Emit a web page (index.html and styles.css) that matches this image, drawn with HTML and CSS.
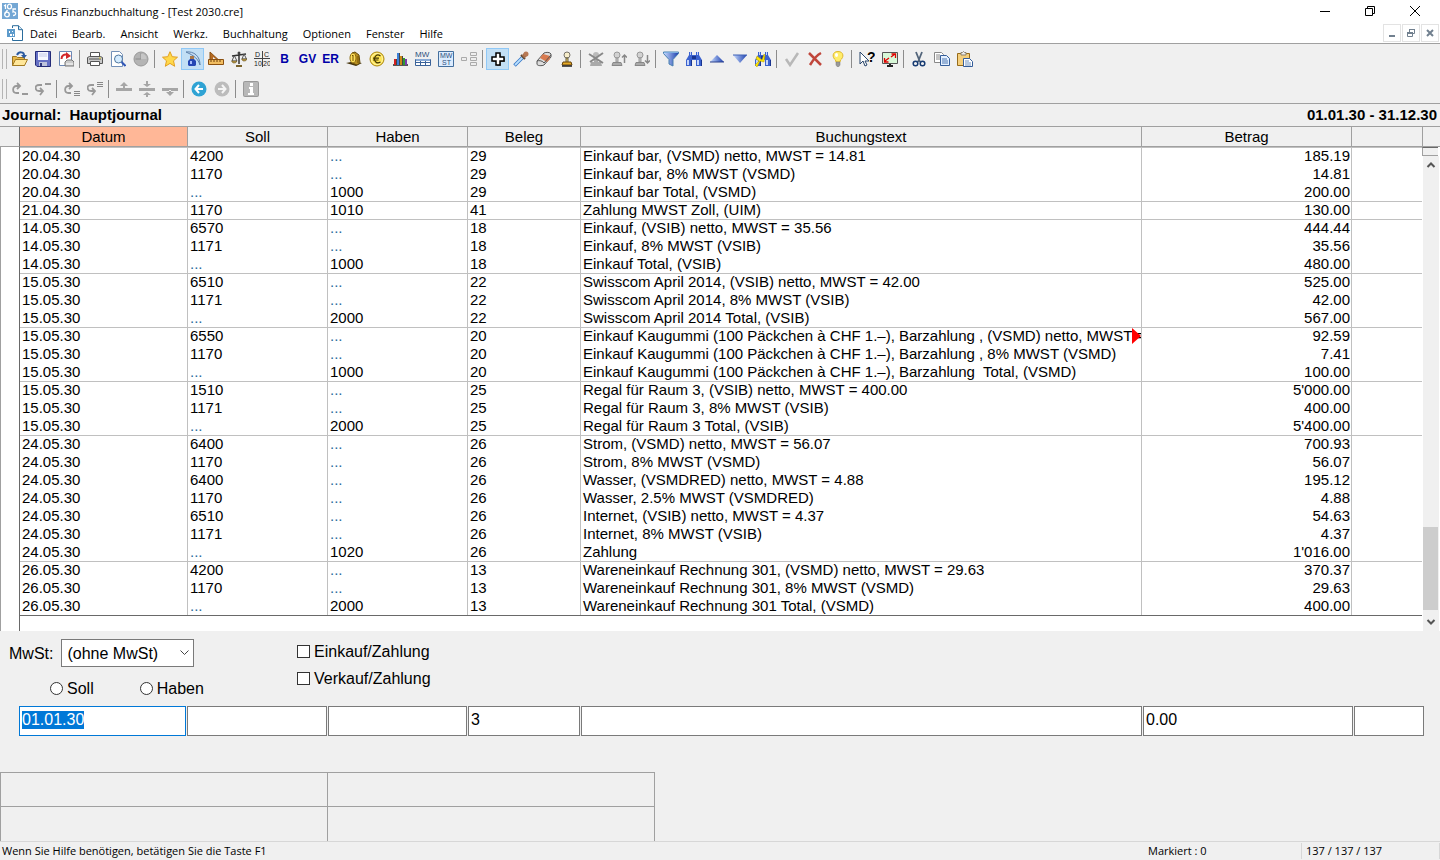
FILE: index.html
```html
<!DOCTYPE html>
<html lang="de">
<head>
  <meta charset="UTF-8"/>
  <title>Crésus Finanzbuchhaltung - [Test 2030.cre]</title>
  <meta name="viewport" content="width=device-width, initial-scale=1.0"/>
  <link rel="stylesheet" href="styles.css">
</head>
<body>

  <!-- shared gradients for the toolbar icons -->
  <svg class="defs" aria-hidden="true">
    <defs>
      <linearGradient id="blue" x1="0" y1="0" x2="1" y2="0"><stop offset="0" stop-color="#c8dcff"/><stop offset="1" stop-color="#1c3fae"/></linearGradient>
    </defs>
    <symbol id="binoculars" viewBox="0 0 16 16">
      <path d="M3 1h3v3h4V1h3v3l3 5v6h-6V9H6v6H0V9l3-5z" fill="#3b62cf"/>
      <path d="M4 1h1v3H4zM11 1h1v3h-1zM1 9h2v5H1zM11 9h2v5h-2z" fill="#c5d5fa"/>
      <path d="M6 5h4v3H6z" fill="#1a3590"/>
      <path d="M5 9h1v6H5zM15 9h1v6h-1z" fill="#1a3590"/>
    </symbol>
    <symbol id="stamp-gray" viewBox="0 0 16 16">
      <circle cx="6" cy="4" r="3" fill="#d2d2d2" stroke="#999"/>
      <path d="M5 7h2v4H5z" fill="#c4c4c4" stroke="#999"/>
      <path d="M2 11.500h8l1 3H1z" fill="#aaa" stroke="#888"/>
    </symbol>
  </svg>

  <header class="titlebar">
    <svg class="logo" viewBox="0 0 16 16" aria-hidden="true"><path fill="#74a7d4" d="M0 0h16v16H0z"/><g fill="none" stroke="#fff" stroke-width="1.300"><ellipse cx="7.500" cy="3.500" rx="2" ry="2.300"/><path d="M2 3l1.500-1v4"/><circle cx="5" cy="11.500" r="2.300"/><path d="M5.500 7L3 10.500M14 6h-3v3c3-1 4 3.500 0 3.500"/></g></svg>
    <h1>Crésus Finanzbuchhaltung - [Test 2030.cre]</h1>
    <div class="window-buttons">
      <button type="button" aria-label="Minimieren"><svg viewBox="0 0 12 12"><path d="M1 6.500h10" stroke="#000"/></svg></button>
      <button type="button" aria-label="Wiederherstellen"><svg viewBox="0 0 12 12"><path d="M1.500 3.500h7v7h-7zM3.500 3.500v-2h7v7h-2" fill="none" stroke="#000"/></svg></button>
      <button type="button" aria-label="Schliessen"><svg viewBox="0 0 12 12"><path d="M1 1l10 10M11 1L1 11" stroke="#000"/></svg></button>
    </div>
  </header>

  <nav class="menubar">
    <svg class="logo" viewBox="0 0 16 16" aria-hidden="true"><path d="M5.500 3V.700h6l4 4v10.800h-10V13" fill="#fff" stroke="#2a6c9c"/><path d="M11.500.700v4h4" fill="#d5e6f3" stroke="#2a6c9c"/><path d="M0 4h8v8H0z" fill="#5e9bcb"/><path d="M2 6h1v2H2zM5 6h1v1H5zM3 9h2v2H3zM6 9h1v2H6z" fill="#fff"/></svg>
    <a href="#">Datei</a>
    <a href="#">Bearb.</a>
    <a href="#">Ansicht</a>
    <a href="#">Werkz.</a>
    <a href="#">Buchhaltung</a>
    <a href="#">Optionen</a>
    <a href="#">Fenster</a>
    <a href="#">Hilfe</a>
    <div class="mdi-buttons">
      <button type="button" aria-label="Fenster minimieren"><svg viewBox="0 0 10 10"><path d="M2 7h6v2H2z" fill="#71808f"/></svg></button>
      <button type="button" aria-label="Fenster wiederherstellen"><svg viewBox="0 0 10 10"><path d="M1.500 4.500h5v4h-5zM3.500 4V1.500h5v4H7" fill="none" stroke="#71808f"/><path d="M1 4h6v2H1zM3 1h6v1H3z" fill="#71808f"/></svg></button>
      <button type="button" aria-label="Fenster schliessen"><svg viewBox="0 0 10 10"><path d="M2 2l6 6M8 2L2 8" stroke="#71808f" stroke-width="2"/></svg></button>
    </div>
  </nav>

  <div class="toolbars">
    <div class="toolbar">
      <span class="grip"></span>
      <button type="button" aria-label="Öffnen"><svg viewBox="0 0 16 16"><path d="M.500 14.500v-9h4l1 1h7v8z" fill="#e8b84a" stroke="#9b7420"/><path d="M.500 14.500l3-6h12l-3 6z" fill="#ffe79a" stroke="#a27a22"/><path d="M5 4c2-4 7-3 7 0" fill="none" stroke="#2b5aa0" stroke-width="2"/><path d="M9 4h6l-3 3.500z" fill="#2b5aa0"/></svg></button>
      <button type="button" aria-label="Speichern"><svg viewBox="0 0 16 16"><path d="M.500 .500h15v15H2l-1.500-1.500z" fill="#6570c4" stroke="#252c78"/><path d="M3 1h10v8H3z" fill="#f7f8ff"/><path d="M4 3h8M4 5h8" stroke="#c5cae9"/><path d="M4 11h8v4H4z" fill="#bfc4dc"/><path d="M5 12h2v3H5z" fill="#30387e"/></svg></button>
      <button type="button" aria-label="PDF"><svg viewBox="0 0 16 16"><path d="M1.500.500h12v14h-12z" fill="#fff" stroke="#6b88b5"/><path d="M3.500 8c0-4 3-5 6-4" fill="none" stroke="#d3272b" stroke-width="2"/><path d="M8 1l5 4-5 3z" fill="#d3272b"/><path d="M7 11l2-2h5l2 2v4H7z" fill="#ccc" stroke="#777"/><path d="M8 13h7" stroke="#fff"/></svg></button>
      <span class="sep"></span>
      <button type="button" aria-label="Drucken"><svg viewBox="0 0 16 16"><path d="M3.500 6V1.500h9V6" fill="#fff" stroke="#555"/><path d="M.500 6.500l2-1h11l2 1v6H.500z" fill="#c9c9c9" stroke="#555"/><path d="M2 8h12" stroke="#555"/><path d="M3.500 10.500h9v4h-9z" fill="#fff" stroke="#555"/><path d="M12 7h2" stroke="#dc3"/></svg></button>
      <button type="button" aria-label="Seitenansicht"><svg viewBox="0 0 16 16"><path d="M1.500.500h8l3 3v12h-11z" fill="#fff" stroke="#7390b8"/><circle cx="8.500" cy="8" r="4" fill="#d5ecff" stroke="#50779f"/><path d="M11.500 11l4 4" stroke="#3157b7" stroke-width="2"/></svg></button>
      <button type="button" aria-label="Verlauf"><svg viewBox="0 0 16 16"><circle cx="8" cy="8" r="7" fill="#b4b4b4" stroke="#999"/><path d="M8 2v6H2.500" fill="none" stroke="#8c8c8c"/><path d="M8 8h5.500A5.500 5.500 0 008 2.500z" fill="#c6c6c6"/></svg></button>
      <span class="sep"></span>
      <button type="button" aria-label="Favoriten"><svg viewBox="0 0 16 16"><path d="M8 .700l2.200 5 5.300.500-4 3.600 1.200 5.500L8 12.400l-4.700 2.900 1.200-5.500-4-3.600 5.300-.500z" fill="#ffd84a" stroke="#e2a020"/></svg></button>
      <button type="button" class="active" aria-label="Journal"><svg viewBox="0 0 16 16"><path d="M1 1c8-1 14 4 14 13-2-6-5-9-14-13z" fill="#c6dcf2" stroke="#5d82ac"/><path d="M5 5h4v3H5z" fill="#a9794a"/><path d="M5 8h4l2 2v4l-1 1H4l-1-1v-4z" fill="#2547b4"/><path d="M5 10h2v3H5z" fill="#a6bdfb"/></svg></button>
      <button type="button" aria-label="Konten"><svg viewBox="0 0 16 16"><path d="M2 1l13 12H2z" fill="#b56a22" stroke="#8b5010"/><path d="M5 6l4 3H5z" fill="#f0f0f0"/><path d="M.500 8.500h15v5H.500z" fill="#f1bd61" stroke="#8b5010"/><path d="M3 9v2M6 9v2M9 9v2M12 9v2" stroke="#704008"/></svg></button>
      <button type="button" aria-label="Bilanzen"><svg viewBox="0 0 16 16"><path d="M8 2v11M1 5l14-2" stroke="#333" stroke-width="1.500"/><path d="M3 5L1 10h5L3.500 5M13 3l-2 5h4.500L13 3" fill="none" stroke="#555"/><path d="M.500 10H6l-1.500 2H2zM10.500 8H16l-1.500 2H12z" fill="#bb9a48" stroke="#5f4a18" stroke-width=".500"/><path d="M5 14h6v2H5z" fill="#7a632c"/><circle cx="8" cy="2" r="1.500" fill="#444"/></svg></button>
      <button type="button" aria-label="Soll und Haben"><svg viewBox="0 0 16 16"><path d="M0 7.500h16M8.500 0v16" stroke="#444"/><g fill="#222" font-size="7"><text x="1" y="6">D</text><text x="10" y="6">C</text><text x="0" y="15">10</text><text x="9" y="15">20</text></g></svg></button>
      <button type="button" class="letters">B</button>
      <button type="button" class="letters">GV</button>
      <button type="button" class="letters">ER</button>
      <button type="button" aria-label="Budget"><svg viewBox="0 0 16 16"><path d="M0 12l5-1 11 1-6 3z" fill="#45330a"/><path d="M6 2l3-1 4 3 1 8-3 2-5-2z" fill="#b98f20" stroke="#60490c"/><ellipse cx="7" cy="7" rx="3" ry="5" fill="#ffe05a" stroke="#8c6b12"/><path d="M6 5l1-1v6M12 5v7" fill="none" stroke="#704f00"/></svg></button>
      <button type="button" aria-label="Währungen"><svg viewBox="0 0 16 16"><circle cx="8" cy="8" r="7" fill="#ffe550" stroke="#a98512"/><circle cx="8" cy="8" r="5.500" fill="none" stroke="#fff5a8"/><path d="M11.500 5C8 2.500 5.500 5 5.500 8S8 13 11.500 11M4 7.200h6M4 9h5.500" fill="none" stroke="#473800" stroke-width="1.200"/></svg></button>
      <button type="button" aria-label="Grafik"><svg viewBox="0 0 16 16" shape-rendering="crispEdges"><path d="M1 14h15" stroke="#555" stroke-width="2"/><path d="M2 8h2v6H2z" fill="#d32020"/><path d="M5 2h2v12H5z" fill="#3c80d8"/><path d="M8 5h2v9H8z" fill="#c88a18"/><path d="M11 7h2v7h-2z" fill="#2c9934"/><path d="M13 8h2v6h-2z" fill="#793aad"/><path d="M4 8v6M7 2v12M10 5v9" stroke="#444"/></svg></button>
      <button type="button" aria-label="MWST Tabelle"><svg viewBox="0 0 16 16"><text x="0" y="6" font-size="8" class="mw">MW</text><path d="M.500 8.500h15v6H.500zM.500 11.500h15M5.500 8.500v6M10.500 8.500v6" fill="#fff" stroke="#3a6299"/><path d="M1 8h14v2H1z" fill="#88aad6"/></svg></button>
      <button type="button" aria-label="MWST Abrechnung"><svg viewBox="0 0 16 16"><path d="M.500.500h15v15H.500z" fill="#dcecff" stroke="#446f9e"/><g class="mw" font-size="7"><text x="2" y="7">MW</text><text x="4" y="14">ST</text></g></svg></button>
      <button type="button" aria-label="Struktur"><svg viewBox="0 0 16 16"><path d="M.500 6.500h5v3h-5zM9.500 1.500h6v3h-6zM9.500 6.500h6v3h-6zM9.500 11.500h6v3h-6z" fill="#eee" stroke="#aaa"/></svg></button>
      <span class="sep"></span>
      <button type="button" class="active" aria-label="Neu"><svg viewBox="0 0 16 16"><path d="M7 3h4v4h4v4h-4v4H7v-4H3V7h4z" fill="#777"/><path d="M6 2h4v4h4v4h-4v4H6v-4H2V6h4z" fill="#fff" stroke="#000" stroke-width="1.500"/></svg></button>
      <button type="button" aria-label="Pipette"><svg viewBox="0 0 16 16"><path d="M1.500 14.500l8-8" stroke="#3978c7" stroke-width="3.500"/><path d="M2 14l8-8" stroke="#b8e0ff" stroke-width="1.800"/><path d="M8 4l4 4" stroke="#54402f" stroke-width="2"/><path d="M10 6l2.500-2.500" stroke="#a46f4c" stroke-width="4"/><circle cx="13" cy="3" r="2.500" fill="#b87955"/></svg></button>
      <button type="button" aria-label="Löschen"><svg viewBox="0 0 16 16"><path d="M1 10l7-8c2-1 6-1 7 1v3l-7 8c-2 1-7 1-7-1z" fill="#ddd" stroke="#555"/><path d="M4 7l3-4 7 2v3l-3 3z" fill="#d97b50"/><path d="M1 10c2-1 6 0 7 2l7-8" fill="none" stroke="#555"/></svg></button>
      <button type="button" aria-label="Stempel"><svg viewBox="0 0 16 16"><circle cx="8" cy="4" r="3" fill="#f7eecb" stroke="#77726a"/><path d="M7 7h2v5H7z" fill="#e9cf70" stroke="#655d3c"/><path d="M4 11h8l1 3H3z" fill="#e5aa28" stroke="#65420c"/><path d="M3 15h10" stroke="#222" stroke-width="1.500"/></svg></button>
      <span class="sep"></span>
      <button type="button" aria-label="Stempel entfernen"><svg viewBox="0 0 16 16"><circle cx="8" cy="4" r="3" fill="#bbb"/><path d="M6 8h4v3h3l1 4H2l1-4h3z" fill="#aaa"/><path d="M1 3l14 9M15 2L2 11" stroke="#888" stroke-width="2"/></svg></button>
      <button type="button" aria-label="Stempel zurück"><svg viewBox="0 0 16 16"><use href="#stamp-gray"/><path d="M13.500 12V4M11 6.500L13.500 4 16 6.500" fill="none" stroke="#888" stroke-width="1.500"/></svg></button>
      <button type="button" aria-label="Stempel weiter"><svg viewBox="0 0 16 16"><use href="#stamp-gray"/><path d="M13.500 4v8M11 9.500l2.500 2.500L16 9.500" fill="none" stroke="#888" stroke-width="1.500"/></svg></button>
      <span class="sep"></span>
      <button type="button" aria-label="Filter"><svg viewBox="0 0 16 16"><path d="M.500 1h15v1.500L10 8.500V15l-4-2V8.500L.500 2.500z" fill="url(#blue)" stroke="#4a80b0"/><path d="M1 1.500h14" stroke="#7caee0"/></svg></button>
      <button type="button" aria-label="Suchen"><svg><use href="#binoculars"/></svg></button>
      <button type="button" aria-label="Vorheriges"><svg viewBox="0 0 16 16"><path d="M8 4l7 7H1z" fill="url(#blue)"/><path d="M1 11h14" stroke="#283f8c"/></svg></button>
      <button type="button" aria-label="Nächstes"><svg viewBox="0 0 16 16"><path d="M8 12L1 4h14z" fill="url(#blue)"/><path d="M1 4h14" stroke="#3e61b5"/></svg></button>
      <button type="button" aria-label="Ersetzen"><svg viewBox="0 0 16 16"><use href="#binoculars"/><path d="M2 5l5 4 2-6 1 1-1 7-4-1-3 6-2-2 4-4-3-2z" fill="#ffe600" stroke="#b79c00" stroke-width=".500"/></svg></button>
      <span class="sep"></span>
      <button type="button" aria-label="Übernehmen"><svg viewBox="0 0 16 16"><path d="M2 8l4 6 8-12" fill="none" stroke="#b8b8b8" stroke-width="2.500"/></svg></button>
      <button type="button" aria-label="Abbrechen"><svg viewBox="0 0 16 16"><path d="M2 2l12 12M14 2c-4 2-8 7-11 12" fill="none" stroke="#c0463b" stroke-width="2.500"/></svg></button>
      <button type="button" aria-label="Tipp"><svg viewBox="0 0 16 16"><path d="M8 .500c6 0 6 6 2.500 8.500L10 11H6l-.500-2C2 6.500 2 .500 8 .500z" fill="#ffed6a" stroke="#dfb62c"/><path d="M6 11h4v3l-1 1.500H7L6 14z" fill="#999" stroke="#777" stroke-width=".500"/><ellipse cx="6.500" cy="4" rx="1.500" ry="2" fill="#fff"/></svg></button>
      <span class="sep"></span>
      <button type="button" aria-label="Kontexthilfe"><svg viewBox="0 0 16 16"><path d="M1 1v12l3-3 2 5 2-1-2-4h4z" fill="#fff" stroke="#27456b"/><text x="8" y="11" class="question">?</text></svg></button>
      <button type="button" aria-label="Vollbild"><svg viewBox="0 0 16 16"><path d="M.500 1.500h15v11H.500z" fill="#d8f8d8" stroke="#555"/><path d="M5 15h6M8 13v2" stroke="#222" stroke-width="2"/><path d="M3 10l4-3M9 6l4-3M2.500 7v4h4M9.500 3h4v4" fill="none" stroke="#e00000" stroke-width="1.300"/></svg></button>
      <span class="sep"></span>
      <button type="button" aria-label="Ausschneiden"><svg viewBox="0 0 16 16"><path d="M5 1l4 10M11 1L7 11" stroke="#53657b" stroke-width="1.800"/><circle cx="4.500" cy="12.500" r="2.300" fill="none" stroke="#173b72" stroke-width="1.500"/><circle cx="11.500" cy="12.500" r="2.300" fill="none" stroke="#173b72" stroke-width="1.500"/></svg></button>
      <button type="button" aria-label="Kopieren"><svg viewBox="0 0 16 16"><path d="M.500 1.500h7l2 2v8h-9z" fill="#fff" stroke="#888"/><path d="M2 4h4M2 6h5M2 8h4" stroke="#888"/><path d="M6.500 4.500h6l3 3v7h-9z" fill="#e4f0ff" stroke="#345d9a"/><path d="M8 8h5M8 10h6M8 12h6" stroke="#4d77b0"/></svg></button>
      <button type="button" aria-label="Einfügen"><svg viewBox="0 0 16 16"><path d="M.500 2.500h12v12H.500z" fill="#f5cf7c" stroke="#966b1a"/><path d="M4 3V1.500h1.500l1-1 1 1H9V4H4z" fill="#eee" stroke="#8b806c"/><path d="M6.500 7.500h6l3 3v5h-9z" fill="#fff" stroke="#345d9a"/><path d="M8 10h4M8 12h6M8 14h6" stroke="#6c91c0"/></svg></button>
    </div>

    <div class="toolbar">
      <span class="grip"></span>
      <button type="button" aria-label="Zeile unten"><svg viewBox="0 0 16 16"><path d="M8 5H4.500C0 5 0 12 4.500 12H7M5 2l3 3-3 3M10 13h6" fill="none" stroke="#999" stroke-width="1.800"/></svg></button>
      <button type="button" aria-label="Zeile oben"><svg viewBox="0 0 16 16"><path d="M7 4H4C-1 4 0 10 4 10h4M5 7l3 3-3 4M10 3h6" fill="none" stroke="#999" stroke-width="1.800"/></svg></button>
      <span class="sep"></span>
      <button type="button" aria-label="Block unten"><svg viewBox="0 0 16 16"><path d="M8 5H4.500C0 5 0 12 4.500 12H7M5 2l3 3-3 3" fill="none" stroke="#999" stroke-width="1.800"/><path d="M10 10.500h6M10 12.500h6M10 14.500h6" stroke="#888"/></svg></button>
      <button type="button" aria-label="Block oben"><svg viewBox="0 0 16 16"><path d="M7 4H4C-1 4 0 10 4 10h4M5 7l3 3-3 4" fill="none" stroke="#999" stroke-width="1.800"/><path d="M10 1.500h6M10 3.500h6M10 5.500h6" stroke="#888"/></svg></button>
      <span class="sep"></span>
      <button type="button" aria-label="Nach oben"><svg viewBox="0 0 16 16"><path d="M0 7h16v3H0zM8 1l4 4H9v3H7V5H4z" fill="#a6a6a6"/></svg></button>
      <button type="button" aria-label="Zusammen"><svg viewBox="0 0 16 16"><path d="M0 7h16v3H0zM8 6l4-3H9V0H7v3H4zM8 11l4 3H9v2H7v-2H4z" fill="#a6a6a6"/></svg></button>
      <button type="button" aria-label="Nach unten"><svg viewBox="0 0 16 16"><path d="M0 7h16v3H0zM8 15l4-4H9V9H7v2H4z" fill="#a6a6a6"/></svg></button>
      <span class="sep"></span>
      <button type="button" aria-label="Zurück"><svg viewBox="0 0 16 16"><circle cx="8" cy="8" r="7.500" fill="#2fa3d4"/><path d="M12 8H5M8 4L4.500 8 8 12" fill="none" stroke="#fff" stroke-width="2"/></svg></button>
      <button type="button" aria-label="Vorwärts"><svg viewBox="0 0 16 16"><circle cx="8" cy="8" r="7.500" fill="#bcbcbc"/><path d="M4 8h7M8 4l3.500 4L8 12" fill="none" stroke="#f5f5f5" stroke-width="2"/></svg></button>
      <span class="sep"></span>
      <button type="button" aria-label="Info"><svg viewBox="0 0 16 16"><rect width="16" height="16" rx="2" fill="#999"/><rect x="1" y="1" width="14" height="14" rx="1" fill="#b8b8b8"/><path d="M6 6h4v6h1v2H5v-2h2V8H6zM7 2h3v3H7z" fill="#fff"/></svg></button>
    </div>
  </div>

  <div class="journal-head">
    <h2>Journal:&nbsp; Hauptjournal</h2>
    <span>01.01.30 - 31.12.30</span>
  </div>

  <main class="journal">
    <table>
      <colgroup>
        <col class="c-mark"><col class="c-date"><col class="c-account"><col class="c-account"><col class="c-ref"><col><col class="c-amount"><col class="c-rest">
      </colgroup>
      <thead>
        <tr><th class="mark"></th><th class="sorted">Datum</th><th>Soll</th><th>Haben</th><th>Beleg</th><th>Buchungstext</th><th>Betrag</th><th></th></tr>
      </thead>
      <tbody>
        <tr class="first"><td></td><td>20.04.30</td><td>4200</td><td class="dots">...</td><td>29</td><td>Einkauf bar, (VSMD) netto, MWST = 14.81</td><td>185.19</td><td></td></tr>
        <tr><td></td><td>20.04.30</td><td>1170</td><td class="dots">...</td><td>29</td><td>Einkauf bar, 8% MWST (VSMD)</td><td>14.81</td><td></td></tr>
        <tr><td></td><td>20.04.30</td><td class="dots">...</td><td>1000</td><td>29</td><td>Einkauf bar Total, (VSMD)</td><td>200.00</td><td></td></tr>
        <tr class="first"><td></td><td>21.04.30</td><td>1170</td><td>1010</td><td>41</td><td>Zahlung MWST Zoll, (UIM)</td><td>130.00</td><td></td></tr>
        <tr class="first"><td></td><td>14.05.30</td><td>6570</td><td class="dots">...</td><td>18</td><td>Einkauf, (VSIB) netto, MWST = 35.56</td><td>444.44</td><td></td></tr>
        <tr><td></td><td>14.05.30</td><td>1171</td><td class="dots">...</td><td>18</td><td>Einkauf, 8% MWST (VSIB)</td><td>35.56</td><td></td></tr>
        <tr><td></td><td>14.05.30</td><td class="dots">...</td><td>1000</td><td>18</td><td>Einkauf Total, (VSIB)</td><td>480.00</td><td></td></tr>
        <tr class="first"><td></td><td>15.05.30</td><td>6510</td><td class="dots">...</td><td>22</td><td>Swisscom April 2014, (VSIB) netto, MWST = 42.00</td><td>525.00</td><td></td></tr>
        <tr><td></td><td>15.05.30</td><td>1171</td><td class="dots">...</td><td>22</td><td>Swisscom April 2014, 8% MWST (VSIB)</td><td>42.00</td><td></td></tr>
        <tr><td></td><td>15.05.30</td><td class="dots">...</td><td>2000</td><td>22</td><td>Swisscom April 2014 Total, (VSIB)</td><td>567.00</td><td></td></tr>
        <tr class="first"><td></td><td>15.05.30</td><td>6550</td><td class="dots">...</td><td>20</td><td class="overflow">Einkauf Kaugummi (100 Päckchen à CHF 1.–), Barzahlung , (VSMD) netto, MWST = 7.41</td><td>92.59</td><td></td></tr>
        <tr><td></td><td>15.05.30</td><td>1170</td><td class="dots">...</td><td>20</td><td>Einkauf Kaugummi (100 Päckchen à CHF 1.–), Barzahlung , 8% MWST (VSMD)</td><td>7.41</td><td></td></tr>
        <tr><td></td><td>15.05.30</td><td class="dots">...</td><td>1000</td><td>20</td><td>Einkauf Kaugummi (100 Päckchen à CHF 1.–), Barzahlung&nbsp; Total, (VSMD)</td><td>100.00</td><td></td></tr>
        <tr class="first"><td></td><td>15.05.30</td><td>1510</td><td class="dots">...</td><td>25</td><td>Regal für Raum 3, (VSIB) netto, MWST = 400.00</td><td>5'000.00</td><td></td></tr>
        <tr><td></td><td>15.05.30</td><td>1171</td><td class="dots">...</td><td>25</td><td>Regal für Raum 3, 8% MWST (VSIB)</td><td>400.00</td><td></td></tr>
        <tr><td></td><td>15.05.30</td><td class="dots">...</td><td>2000</td><td>25</td><td>Regal für Raum 3 Total, (VSIB)</td><td>5'400.00</td><td></td></tr>
        <tr class="first"><td></td><td>24.05.30</td><td>6400</td><td class="dots">...</td><td>26</td><td>Strom, (VSMD) netto, MWST = 56.07</td><td>700.93</td><td></td></tr>
        <tr><td></td><td>24.05.30</td><td>1170</td><td class="dots">...</td><td>26</td><td>Strom, 8% MWST (VSMD)</td><td>56.07</td><td></td></tr>
        <tr><td></td><td>24.05.30</td><td>6400</td><td class="dots">...</td><td>26</td><td>Wasser, (VSMDRED) netto, MWST = 4.88</td><td>195.12</td><td></td></tr>
        <tr><td></td><td>24.05.30</td><td>1170</td><td class="dots">...</td><td>26</td><td>Wasser, 2.5% MWST (VSMDRED)</td><td>4.88</td><td></td></tr>
        <tr><td></td><td>24.05.30</td><td>6510</td><td class="dots">...</td><td>26</td><td>Internet, (VSIB) netto, MWST = 4.37</td><td>54.63</td><td></td></tr>
        <tr><td></td><td>24.05.30</td><td>1171</td><td class="dots">...</td><td>26</td><td>Internet, 8% MWST (VSIB)</td><td>4.37</td><td></td></tr>
        <tr><td></td><td>24.05.30</td><td class="dots">...</td><td>1020</td><td>26</td><td>Zahlung</td><td>1'016.00</td><td></td></tr>
        <tr class="first"><td></td><td>26.05.30</td><td>4200</td><td class="dots">...</td><td>13</td><td>Wareneinkauf Rechnung 301, (VSMD) netto, MWST = 29.63</td><td>370.37</td><td></td></tr>
        <tr><td></td><td>26.05.30</td><td>1170</td><td class="dots">...</td><td>13</td><td>Wareneinkauf Rechnung 301, 8% MWST (VSMD)</td><td>29.63</td><td></td></tr>
        <tr><td></td><td>26.05.30</td><td class="dots">...</td><td>2000</td><td>13</td><td>Wareneinkauf Rechnung 301 Total, (VSMD)</td><td>400.00</td><td></td></tr>
        <tr class="tail"><td></td><td colspan="7"></td></tr>
      </tbody>
    </table>
    <div class="scroll">
      <span class="scroll-head"></span>
      <span class="splitter"></span>
      <button type="button" aria-label="Nach oben blättern"><svg viewBox="0 0 10 10"><path d="M1.500 7L5 3.500 8.500 7" fill="none" stroke="#555" stroke-width="2"/></svg></button>
      <span class="track"><span class="thumb"></span></span>
      <button type="button" aria-label="Nach unten blättern"><svg viewBox="0 0 10 10"><path d="M1.500 3L5 6.500 8.500 3" fill="none" stroke="#555" stroke-width="2"/></svg></button>
    </div>
  </main>

  <form class="entry">
    <div class="options">
      <div class="vat">
        <div class="vat-code">
          <label for="mwst">MwSt:</label>
          <select id="mwst"><option>(ohne MwSt)</option></select>
        </div>
        <div class="side">
          <label><input type="radio" name="side">Soll</label>
          <label><input type="radio" name="side">Haben</label>
        </div>
      </div>
      <div class="checks">
        <label><input type="checkbox">Einkauf/Zahlung</label>
        <label><input type="checkbox">Verkauf/Zahlung</label>
      </div>
    </div>
    <div class="fields">
      <input type="text" id="date" value="01.01.30" aria-label="Datum" autofocus>
      <input type="text" aria-label="Soll">
      <input type="text" aria-label="Haben">
      <input type="text" value="3" aria-label="Beleg">
      <input type="text" aria-label="Buchungstext">
      <input type="text" value="0.00" aria-label="Betrag">
      <input type="text" aria-label="Zusatz">
    </div>
    <div class="balances">
      <span></span><span></span><span></span><span></span>
    </div>
  </form>

  <footer class="status">
    <span class="hint">Wenn Sie Hilfe benötigen, betätigen Sie die Taste F1</span>
    <span class="marked">Markiert : 0</span>
    <span class="count">137 / 137 / 137</span>
  </footer>

  <script src="script.js"></script>
</body>
</html>
```
FILE: styles.css
```css
* {
  box-sizing: border-box;
}
body {
  margin: 0;
  min-height: 100vh;
  display: flex;
  flex-direction: column;
  background-color: #f0f0f0;
  color: #000;
  font-family: "Open Sans", "Noto Sans", sans-serif;
  font-size: 11px;
}
button {
  margin: 0;
  padding: 0;
  border: 0;
  background: none;
  font: inherit;
  display: flex;
  align-items: center;
  justify-content: center;
}
a {
  color: #000;
  text-decoration: none;
}
.defs {
  position: absolute;
  width: 0;
  height: 0;
}

/* title and menu */
.titlebar, .menubar {
  display: flex;
  align-items: center;
  background-color: #fff;
}
.titlebar {
  height: 24px;
  padding: 0 3px 2px 2px;
}
.titlebar h1 {
  margin: 0 auto 0 5px;
  font-size: 11px;
  font-weight: normal;
}
.logo {
  width: 16px;
  height: 16px;
}
.window-buttons {
  display: flex;
}
.window-buttons button {
  width: 45px;
  height: 20px;
}
.window-buttons svg {
  width: 12px;
  height: 12px;
}
.menubar {
  height: 20px;
  gap: 15px;
  padding: 0 1px 1px 7px;
  border-bottom: 1px solid #a0a0a0;
}
.menubar .logo {
  margin-right: -8px;
}
.mdi-buttons {
  display: flex;
  gap: 1px;
  margin-left: auto;
}
.mdi-buttons button {
  width: 18px;
  height: 18px;
  border: 1px solid #e3e3e3;
}
.mdi-buttons svg {
  width: 10px;
  height: 10px;
}

/* toolbars */
.toolbars {
  height: 60px;
  border-bottom: 1px solid #a0a0a0;
}
.toolbar {
  display: flex;
  align-items: center;
  height: 30px;
  padding-left: 2px;
}
.toolbar button {
  width: 23px;
  height: 22px;
}
.toolbar svg {
  width: 16px;
  height: 16px;
}
.toolbar .active {
  background-color: #c2dff5;
  border: 1px solid #90c8f6;
}
.toolbar .letters {
  color: #0000a8;
  font-family: "Liberation Sans", Arial, sans-serif;
  font-size: 12px;
  font-weight: bold;
}
.toolbar text {
  font-family: "Liberation Sans", Arial, sans-serif;
}
.toolbar .mw {
  fill: #2d4f7c;
}
.toolbar .question {
  font-size: 14px;
  font-weight: bold;
}
.grip {
  width: 5px;
  height: 20px;
  margin-right: 1px;
  border-left: 1px solid #b4b4b4;
  border-right: 1px solid #b4b4b4;
}
.sep {
  width: 6px;
  height: 18px;
  background: linear-gradient(#8c8c8c, #8c8c8c) 2px 0 / 1px 100% no-repeat;
}

/* journal */
.journal-head {
  display: flex;
  justify-content: space-between;
  align-items: center;
  height: 23px;
  padding: 0 3px 2px 2px;
  border-bottom: 1px solid #a0a0a0;
  font-family: "Liberation Sans", Arial, sans-serif;
  font-size: 15px;
  font-weight: bold;
}
.journal-head h2 {
  margin: 0;
  font-size: 15px;
}
.journal {
  display: flex;
  background-color: #fff;
}
table {
  flex: 1;
  width: 0;
  table-layout: fixed;
  border-collapse: separate;
  border-spacing: 0;
  font-family: "Liberation Sans", Arial, sans-serif;
  font-size: 15px;
  line-height: 16px;
}
.c-mark { width: 20px; }
.c-date { width: 168px; }
.c-account { width: 140px; }
.c-ref { width: 113px; }
.c-amount { width: 210px; }
.c-rest { width: 70px; }
th {
  height: 20px;
  padding: 0;
  background-color: #f0f0f0;
  border-right: 1px solid #a0a0a0;
  border-bottom: 1px solid #a0a0a0;
  font-weight: normal;
}
th.mark {
  border-right-color: #696969;
}
th.sorted {
  background-color: #ffb797;
}
th:last-child, td:last-child {
  border-right: 0;
}
td {
  height: 18px;
  padding: 1px 1px 1px 2px;
  border-right: 1px solid #c0c0c0;
  white-space: nowrap;
  overflow: hidden;
}
td:first-child {
  border-left: 1px solid #a0a0a0;
  border-right-color: #696969;
}
td:nth-child(7) {
  text-align: right;
}
.first td + td {
  padding-top: 0;
  border-top: 1px solid #c0c0c0;
}
.dots {
  color: #2a6a9c;
}
.overflow {
  position: relative;
}
.overflow::after {
  content: "";
  position: absolute;
  right: 0;
  top: 0;
  border-left: 9px solid #f00;
  border-top: 8px solid transparent;
  border-bottom: 8px solid transparent;
}
.tail td {
  height: 16px;
  padding: 0;
}
.tail td + td {
  border-top: 1px solid #696969;
}
.scroll {
  display: flex;
  flex-direction: column;
  width: 18px;
}
.scroll-head {
  height: 20px;
  background-color: #f0f0f0;
  border-left: 1px solid #a0a0a0;
  border-bottom: 1px solid #a0a0a0;
}
.splitter {
  width: 16px;
  height: 9px;
  background-color: #f0f0f0;
  border: 1px solid #a0a0a0;
  border-top-color: #696969;
  border-right: 0;
}
.scroll button, .track {
  width: 16px;
  margin-left: 1px;
  background-color: #f0f0f0;
}
.scroll button {
  height: 18px;
}
.scroll svg {
  width: 10px;
  height: 10px;
}
.track {
  flex: 1;
  display: flex;
  flex-direction: column;
  justify-content: flex-end;
  padding-bottom: 3px;
}
.thumb {
  width: 15px;
  height: 83px;
  background-color: #cdcdcd;
}

/* entry form */
.entry {
  flex: 1;
  display: flex;
  flex-direction: column;
  font-family: "Liberation Sans", Arial, sans-serif;
  font-size: 16px;
}
.options {
  display: flex;
  padding: 8px 9px;
}
.vat {
  width: 288px;
}
.vat-code {
  display: flex;
  align-items: center;
  gap: 8px;
}
.vat-code label {
  padding-top: 2px;
}
.vat select {
  appearance: none;
  width: 133px;
  height: 28px;
  padding: 0 5px;
  border: 1px solid #7a7a7a;
  border-radius: 0;
  background: #fff url("data:image/svg+xml,%3Csvg xmlns='http://www.w3.org/2000/svg' width='9' height='6'%3E%3Cpath d='M.5.5l4 4 4-4' fill='none' stroke='%23444'/%3E%3C/svg%3E") right 4px center no-repeat;
  color: #000;
  font: inherit;
}
.side {
  display: flex;
  gap: 46px;
  padding: 12px 0 0 41px;
}
.side label, .checks label {
  display: flex;
  align-items: center;
  gap: 4px;
  line-height: 19px;
}
.entry input {
  appearance: none;
  margin: 0;
  border: 1px solid #333;
  background-color: #fff;
}
.side input, .checks input {
  width: 13px;
  height: 13px;
}
.side input {
  border-radius: 50%;
}
.checks {
  display: flex;
  flex-direction: column;
  gap: 8px;
  padding-top: 3px;
}
.fields {
  display: grid;
  grid-template-columns: 167px 140px 139px 112px 1fr 210px 70px;
  gap: 1px;
  padding: 0 16px 0 19px;
}
.fields input {
  min-width: 0;
  height: 30px;
  padding: 0 2px 3px;
  border-color: #7a7a7a;
  border-radius: 0;
  color: #000;
  font: inherit;
}
.fields input:focus {
  outline: 0;
  border-color: #0078d7;
}
.fields input::selection {
  background-color: #0078d7;
  color: #fff;
}
.balances {
  display: grid;
  grid-template-columns: 327px 327px;
  grid-template-rows: 34px 34px;
  width: 655px;
  margin-top: auto;
  border-top: 1px solid #a0a0a0;
  border-left: 1px solid #a0a0a0;
}
.balances span {
  border-right: 1px solid #a0a0a0;
}
.balances span:nth-child(-n+2) {
  border-bottom: 1px solid #a0a0a0;
}

/* status bar */
.status {
  display: flex;
  align-items: center;
  height: 19px;
  padding: 0 0 0 2px;
  border-top: 1px solid #d7d7d7;
  line-height: 16px;
}
.hint {
  flex: 1;
}
.marked {
  width: 153px;
}
.count {
  width: 139px;
  padding-left: 4px;
  border-left: 1px solid #d7d7d7;
  border-right: 1px solid #d7d7d7;
}
```
FILE: script.js
```js
var date = document.getElementById("date");
date.focus();
date.select();
```
